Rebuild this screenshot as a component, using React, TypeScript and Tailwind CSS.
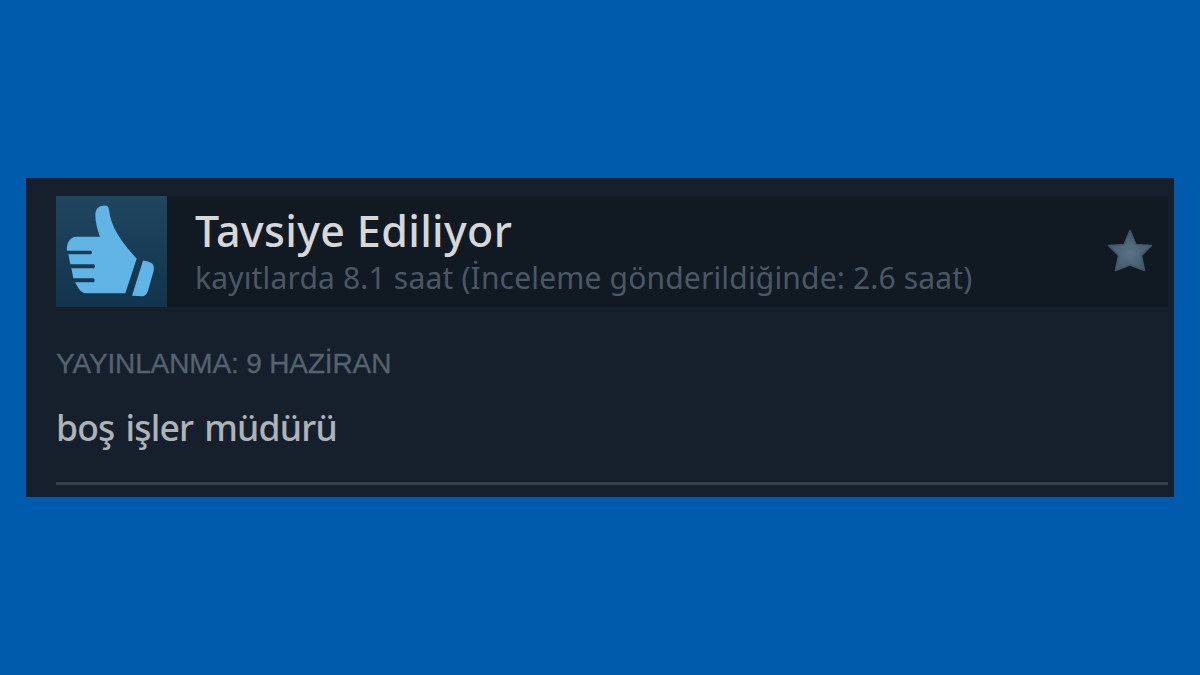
type ReviewProps = {
  verdict: string;
  playtime: string;
  posted: string;
  body: string;
};

function ThumbUpIcon() {
  return (
    <svg viewBox="0 0 333 333" className="h-full w-full" fill="#61b4e6">
      <path d="M118 57C118 36 130 30 142 29C154 28 158 33 159 41C164 94 200 142 242 188L208 292H92C82 292 72 285 67 276L57 259H113Q119 253 113 247H52L46 217H114Q120 211 114 205H43L37 175H105Q111 169 105 164H33C30 140 44 123 60 122H132C124 100 118 78 118 57Z" />
      <path d="M261 194Q275 193 287 202Q296 209 293 224L276 284Q271 300 258 301L228 299Z" />
    </svg>
  );
}

function StarIcon() {
  return (
    <svg viewBox="0 0 46 44" className="h-11 w-[46px] blur-[0.6px]">
      <defs>
        <radialGradient id="star" cx="50%" cy="55%" r="55%">
          <stop offset="0" stopColor="#587486" />
          <stop offset="1" stopColor="#425868" />
        </radialGradient>
      </defs>
      <path
        d="M23 1.5L29 15.5L44.5 16.5L34.5 26.5L37.5 41.5L23 36L8.5 41.5L11.5 26.5L1.5 16.5L17 15.5Z"
        fill="url(#star)"
        stroke="#425868"
        strokeWidth="1.5"
        strokeLinejoin="round"
      />
    </svg>
  );
}

function ReviewCard({ verdict, playtime, posted, body }: ReviewProps) {
  return (
    <article className="h-[319px] w-[1148px] bg-[#16202c] pt-[17.5px] pr-1.5 pl-[30px]">
      <header className="flex h-[111px] items-center bg-[#111923]">
        <div className="size-[111px] shrink-0 bg-linear-to-b from-[#20465f] to-[#12344d]">
          <ThumbUpIcon />
        </div>
        <div className="ml-7 flex-1 pt-px whitespace-nowrap">
          <h1 className="h-[50px] font-['Noto_Sans',sans-serif] text-[43px] leading-[50px] font-medium tracking-[0.35px] text-[#d6d7d8]">
            {verdict}
          </h1>
          <p className="h-[42px] font-['Noto_Sans',sans-serif] text-[30px] leading-[43px] tracking-[0.17px] text-[#4a5865]">
            {playtime}
          </p>
        </div>
        <div className="mr-[15px]">
          <StarIcon />
        </div>
      </header>
      <p className="mt-[37px] h-10 font-['Liberation_Sans',Arial,sans-serif] text-[28px] leading-10 tracking-[-0.14px] whitespace-nowrap text-[#556270] [-webkit-text-stroke:0.3px_#556270]">
        {posted}
      </p>
      <p className="mt-[19px] h-12 font-['Noto_Sans',sans-serif] text-[35.5px] leading-[48px] font-medium tracking-[-0.8px] [word-spacing:2.5px] whitespace-nowrap text-[#acb3b9]">
        {body}
      </p>
      <hr className="mt-[31px] border-0 border-t-[3px] border-[#36414b]" />
    </article>
  );
}

export default function App() {
  return (
    <main className="flex h-[675px] items-center justify-center bg-[#005bac]">
      <ReviewCard
        verdict="Tavsiye Ediliyor"
        playtime="kayıtlarda 8.1 saat (İnceleme gönderildiğinde: 2.6 saat)"
        posted="YAYINLANMA: 9 HAZİRAN"
        body="boş işler müdürü"
      />
    </main>
  );
}
